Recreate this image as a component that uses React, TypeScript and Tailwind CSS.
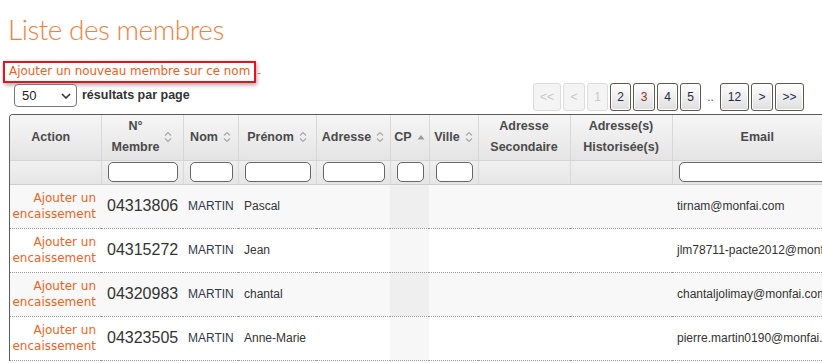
import React from 'react';

type Col = {
  key: string;
  label: React.ReactNode;
  width: number;
  sort?: 'both' | 'asc';
  filter?: boolean;
};

const columns: Col[] = [
  { key: 'action', label: 'Action', width: 91 },
  { key: 'num', label: <>N°<br />Membre</>, width: 82, sort: 'both', filter: true },
  { key: 'nom', label: 'Nom', width: 55, sort: 'both', filter: true },
  { key: 'prenom', label: 'Prénom', width: 78, sort: 'both', filter: true },
  { key: 'adresse', label: 'Adresse', width: 74, sort: 'both', filter: true },
  { key: 'cp', label: 'CP', width: 39, sort: 'asc', filter: true },
  { key: 'ville', label: 'Ville', width: 49, sort: 'both', filter: true },
  { key: 'adr2', label: <>Adresse<br />Secondaire</>, width: 92 },
  { key: 'hist', label: <>Adresse(s)<br />Historisée(s)</>, width: 102 },
  { key: 'email', label: 'Email', width: 170, filter: true },
];

const tableWidth = columns.reduce((s, c) => s + c.width, 0);

const members = [
  { num: '04313806', nom: 'MARTIN', prenom: 'Pascal', email: 'tirnam@monfai.com' },
  { num: '04315272', nom: 'MARTIN', prenom: 'Jean', email: 'jlm78711-pacte2012@monfai.com' },
  { num: '04320983', nom: 'MARTIN', prenom: 'chantal', email: 'chantaljolimay@monfai.com' },
  { num: '04323505', nom: 'MARTIN', prenom: 'Anne-Marie', email: 'pierre.martin0190@monfai.com' },
];

function SortIcon({ kind }: { kind: 'both' | 'asc' }) {
  if (kind === 'asc') {
    return (
      <svg width="8" height="6" viewBox="0 0 8 6" className="shrink-0">
        <path d="M0.5 5.5 L4 1 L7.5 5.5 Z" fill="#9a9a9a" />
      </svg>
    );
  }
  return (
    <svg width="8" height="12" viewBox="0 0 8 12" className="shrink-0">
      <path d="M1 4.5 L4 1.5 L7 4.5" fill="none" stroke="#a8a8a8" strokeWidth="1.2" />
      <path d="M1 7.5 L4 10.5 L7 7.5" fill="none" stroke="#a8a8a8" strokeWidth="1.2" />
    </svg>
  );
}

function PageButton({
  label,
  disabled,
  current,
  w,
}: {
  label: string;
  disabled?: boolean;
  current?: boolean;
  w: number;
}) {
  return (
    <div
      style={{ width: w }}
      className={
        disabled
          ? 'h-[28px] flex items-center justify-center rounded-[3px] border border-[#dcdcdc] bg-[#f4f4f4] text-[12px] text-[#c8c8c8]'
          : 'h-[28px] flex items-center justify-center rounded-[3px] border border-[#5e574e] bg-gradient-to-b from-white to-[#dedede] shadow-[inset_0_0_0_1px_#ffffff] text-[12px] ' +
            (current ? 'text-[#9b2c1c]' : 'text-[#1e2a44]')
      }
    >
      {label}
    </div>
  );
}

export default function App() {
  return (
    <div className="w-[822px] h-[363px] overflow-hidden bg-white font-['Liberation_Sans',Arial,sans-serif] text-[#333]">
      {/* Title */}
      <div className="pl-[8px] pt-[9px] h-[61px]">
        <h1 className="font-['Lato',sans-serif] font-light text-[28px] leading-[40px] tracking-[-0.5px] text-[#f5803e]">
          Liste des membres
        </h1>
      </div>

      {/* New member link */}
      <div className="flex items-center ml-[3px] h-[22px]">
        <div className="h-[22px] px-[4px] flex items-center border-2 border-[#e8121c] shadow-[1px_2px_4px_rgba(0,0,0,0.35)]">
          <span className="font-['DejaVu_Sans',sans-serif] text-[11.9px] text-[#f0601c] leading-none">
            Ajouter un nouveau membre sur ce nom
          </span>
        </div>
        <span className="ml-[1px] text-[11px] text-[#888]">-</span>
      </div>

      {/* Controls row */}
      <div className="flex items-start h-[31px]">
        <div className="flex items-center pl-[14px] pt-[1px] gap-[5px]">
          <div className="w-[63px] h-[23px] rounded-[4px] border border-[#767676] bg-white flex items-center justify-between pl-[7px] pr-[5px]">
            <span className="text-[13px] text-[#222]">50</span>
            <svg width="10" height="6" viewBox="0 0 10 6">
              <path d="M1 1 L5 5 L9 1" fill="none" stroke="#333" strokeWidth="1.6" />
            </svg>
          </div>
          <span className="text-[12.5px] font-bold text-[#333]">résultats par page</span>
        </div>
        <div className="ml-auto mr-[18px] flex items-center gap-[2px]">
          <PageButton label="<<" w={28} disabled />
          <PageButton label="<" w={22} disabled />
          <PageButton label="1" w={21} disabled />
          <PageButton label="2" w={21} />
          <PageButton label="3" w={22} current />
          <PageButton label="4" w={21} />
          <PageButton label="5" w={21} />
          <span className="w-[15px] text-center text-[12px] text-[#555]">..</span>
          <PageButton label="12" w={29} />
          <PageButton label=">" w={22} />
          <PageButton label=">>" w={29} />
        </div>
      </div>

      {/* Table */}
      <div
        style={{ width: tableWidth }}
        className="ml-[9px] border-l border-t border-[#5a5a5a] rounded-tl-[4px] overflow-hidden"
      >
        <table style={{ width: tableWidth }} className="table-fixed border-collapse">
          <colgroup>
            {columns.map((c) => (
              <col key={c.key} style={{ width: c.width }} />
            ))}
          </colgroup>
          <thead>
            <tr className="h-[45px] bg-gradient-to-b from-[#f6f6f6] to-[#e4e4e4]">
              {columns.map((c, i) => (
                <th
                  key={c.key}
                  className={
                    'p-0 text-[12.5px] leading-[21px] font-bold text-[#4a4a4a] border-b border-[#d4d4d4] ' +
                    (i > 0 ? 'border-l border-l-[#d8d8d8]' : '')
                  }
                >
                  <div
                    className={
                      'flex items-center justify-center gap-[5px] ' +
                      (c.key === 'action' ? 'pl-[3px] pr-[12px]' : 'px-[3px]')
                    }
                  >
                    <span className="text-center">{c.label}</span>
                    {c.sort && <SortIcon kind={c.sort} />}
                  </div>
                </th>
              ))}
            </tr>
            <tr className="h-[24px] bg-gradient-to-b from-[#f0f0f0] to-[#e6e6e6]">
              {columns.map((c, i) => (
                <th
                  key={c.key}
                  className={
                    'p-0 border-b border-[#cfcfcf] ' + (i > 0 ? 'border-l border-l-[#d8d8d8]' : '')
                  }
                >
                  {c.filter && (
                    <div className="pl-[6px] pr-[5px]">
                      <div className="h-[20px] rounded-[5px] border border-[#666] bg-white" />
                    </div>
                  )}
                </th>
              ))}
            </tr>
          </thead>
          <tbody>
            {members.map((m, r) => {
              const odd = r % 2 === 0;
              return (
                <tr
                  key={m.num}
                  className={
                    'h-[44px] border-b border-dotted border-[#9a9a9a] ' + (odd ? 'bg-[#f8f8f8]' : 'bg-white')
                  }
                >
                  <td className="p-0 pr-[5px] text-right font-['DejaVu_Sans',sans-serif] text-[12px] leading-[16px] text-[#f0641e]">
                    Ajouter un
                    <br />
                    encaissement
                  </td>
                  <td className="p-0 pl-[6px] text-[16px] text-[#333]">{m.num}</td>
                  <td className="p-0 pl-[5px] text-[12px] text-[#2f3a4e]">{m.nom}</td>
                  <td className="p-0 pl-[6px] text-[12px] text-[#333] whitespace-nowrap overflow-hidden">
                    {m.prenom}
                  </td>
                  <td className="p-0" />
                  <td className={'p-0 ' + (odd ? 'bg-[#efefef]' : 'bg-[#f7f7f7]')} />
                  <td className="p-0" />
                  <td className="p-0" />
                  <td className="p-0" />
                  <td className="p-0 pl-[5px] text-[12px] text-[#333] whitespace-nowrap overflow-hidden">
                    {m.email}
                  </td>
                </tr>
              );
            })}
          </tbody>
        </table>
      </div>
    </div>
  );
}
